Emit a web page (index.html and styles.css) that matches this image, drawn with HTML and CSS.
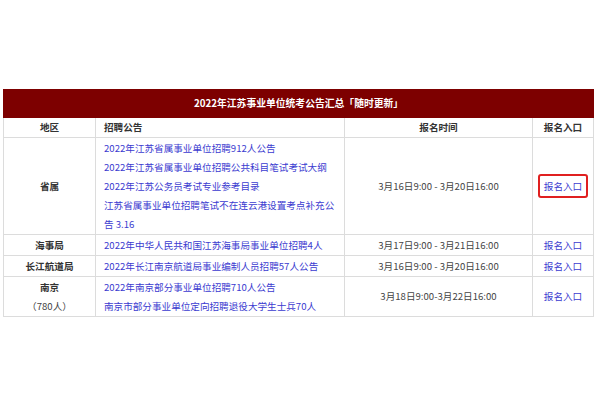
FILE: index.html
```html
<!DOCTYPE html>
<html lang="zh-CN">
<head>
<meta charset="utf-8">
<link rel="stylesheet" href="styles.css">
</head>
<body>
<table class="tbl">
  <colgroup>
    <col class="c1"><col class="c2"><col class="c3"><col class="c4">
  </colgroup>
  <tr class="title-row"><td colspan="4">2022年江苏事业单位统考公告汇总「随时更新」</td></tr>
  <tr class="head-row">
    <td class="center">地区</td>
    <td class="left">招聘公告</td>
    <td class="center">报名时间</td>
    <td class="center">报名入口</td>
  </tr>
  <tr>
    <td class="region">省属</td>
    <td class="links">
      <a>2022年江苏省属事业单位招聘912人公告</a>
      <a>2022年江苏省属事业单位招聘公共科目笔试考试大纲</a>
      <a>2022年江苏公务员考试专业参考目录</a>
      <a>江苏省属事业单位招聘笔试不在连云港设置考点补充公告 3.16</a>
    </td>
    <td class="time">3月16日9:00 - 3月20日16:00</td>
    <td class="entry"><a class="boxed">报名入口</a></td>
  </tr>
  <tr>
    <td class="region">海事局</td>
    <td class="links"><a>2022年中华人民共和国江苏海事局事业单位招聘4人</a></td>
    <td class="time">3月17日9:00 - 3月21日16:00</td>
    <td class="entry"><a>报名入口</a></td>
  </tr>
  <tr>
    <td class="region">长江航道局</td>
    <td class="links"><a>2022年长江南京航道局事业编制人员招聘57人公告</a></td>
    <td class="time">3月16日9:00 - 3月20日16:00</td>
    <td class="entry"><a>报名入口</a></td>
  </tr>
  <tr>
    <td class="region"><span class="rname">南京</span><span class="rnum">（780人）</span></td>
    <td class="links">
      <a>2022年南京部分事业单位招聘710人公告</a>
      <a>南京市部分事业单位定向招聘退役大学生士兵70人</a>
    </td>
    <td class="time">3月18日9:00-3月22日16:00</td>
    <td class="entry"><a>报名入口</a></td>
  </tr>
</table>
</body>
</html>
```
FILE: styles.css
```css
html, body {
  margin: 0;
  padding: 0;
  background: #fff;
}
body {
  padding: 89px 0 0 3px;
  font-family: "Noto Sans CJK SC", "Noto Sans", sans-serif;
  font-size: 9.6px;
  color: #444;
}
.tbl {
  border-collapse: collapse;
  width: 590px;
  table-layout: fixed;
}
.c1 { width: 92px; }
.c2 { width: 249px; }
.c3 { width: 188px; }
.c4 { width: 61px; }
.tbl td {
  border: 1px solid #dcdcdc;
  padding: 0 8px;
  line-height: 19px;
  vertical-align: middle;
}
.title-row td {
  background: #7d0000;
  border-color: #7d0000;
  color: #fff;
  font-weight: bold;
  text-align: center;
  height: 27px;
  padding: 0;
  font-size: 9.8px;
}
.head-row td {
  font-weight: bold;
  color: #333;
  height: 19px;
}
.center { text-align: center; }
.left { text-align: left; }
.region {
  text-align: center;
  font-weight: bold;
  color: #333;
}
.rname, .rnum { display: block; }
.rnum { font-weight: normal; color: #444; }
.links {
  padding-top: 1px !important;
  padding-bottom: 0 !important;
}
.links a {
  display: block;
  color: #3b3bd0;
  text-decoration: none;
}
.time { text-align: center; }
.entry { text-align: center; padding: 0 !important; }
.entry a {
  color: #3b3bd0;
  text-decoration: none;
}
.boxed {
  display: inline-block;
  border: 2px solid #e02020;
  border-radius: 3px;
  padding: 0 4px;
  line-height: 20px;
}
```
